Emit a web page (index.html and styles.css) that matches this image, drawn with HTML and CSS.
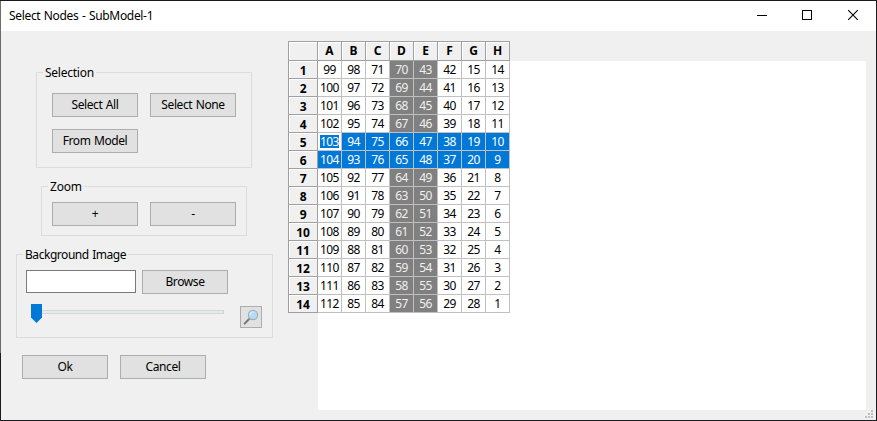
FILE: index.html
```html
<!DOCTYPE html>
<html lang="en">
<head>
<meta charset="utf-8">
<title>Select Nodes - SubModel-1</title>
<link rel="stylesheet" href="styles.css">
</head>
<body>
<div class="window">
  <header class="titlebar">
    <span class="title">Select Nodes - SubModel-1</span>
    <svg class="controls" width="138" height="29" viewBox="0 0 138 29" fill="none" stroke="#000">
      <path d="M19 14.5h10M64.5 9.5h9v9h-9z" shape-rendering="crispEdges"/>
      <path d="M110.2 9.2l9.6 9.6M119.8 9.2l-9.6 9.6" stroke-width="1.1"/>
    </svg>
  </header>
  <main class="content">
    <section class="panel">
      <div class="group selection">
        <span class="legend">Selection</span>
        <div class="row"><button class="btn">Select All</button><button class="btn">Select None</button></div>
        <div class="row"><button class="btn">From Model</button></div>
      </div>
      <div class="group zoom">
        <span class="legend">Zoom</span>
        <div class="row"><button class="btn">+</button><button class="btn">-</button></div>
      </div>
      <div class="group background">
        <span class="legend">Background Image</span>
        <div class="row file"><input class="path" type="text"><button class="btn">Browse</button></div>
        <div class="row opacity">
          <div class="slider">
            <svg class="thumb" width="11" height="19" viewBox="0 0 11 19"><path fill="#0078d7" d="M0 0h11v13.5L5.5 19 0 13.5z"/></svg>
          </div>
          <button class="btn icon">
            <svg width="20" height="20" viewBox="0 0 20 20" fill="none">
              <path d="M3.6 16.6l4.8-4.8" stroke="#737679" stroke-width="2" stroke-linecap="round"/>
              <path d="M7.6 12.4l1.8-1.8" stroke="#a9a9a9" stroke-width="1.2"/>
              <circle cx="12" cy="8" r="4.6" fill="#b3dcf8" stroke="#a3acb4" stroke-width="1.1"/>
              <path d="M9 8.2a3.2 3.2 0 0 1 4-3.2" stroke="#d7edfc" stroke-width="1.3"/>
            </svg>
          </button>
        </div>
      </div>
      <div class="row actions"><button class="btn">Ok</button><button class="btn">Cancel</button></div>
    </section>
    <section class="sheet">
      <div class="grid" id="grid"></div>
    </section>
  </main>
  <svg class="grip" width="8" height="8" viewBox="0 0 8 8" fill="#bfbfbf"><path d="M6 0h2v2H6zM3 3h2v2H3zM6 3h2v2H6zM0 6h2v2H0zM3 6h2v2H3zM6 6h2v2H6z"/></svg>
</div>
<script src="script.js"></script>
</body>
</html>
```
FILE: styles.css
```css
* { box-sizing: border-box; }
body {
  margin: 0;
  font: 12px/16px "Noto Sans", "Open Sans", sans-serif;
  letter-spacing: -0.4px;
  word-spacing: 0.7px;
  color: #000;
}
.window {
  position: relative;
  width: 877px;
  height: 421px;
  padding-left: 1px;
  border: 1px solid #1b1a1c;
  border-left: 0;
  background: linear-gradient(#6c6a6c 352px, #1b1a1c 352px) left / 1px 100% no-repeat #f0f0f0;
  overflow: hidden;
}
.titlebar {
  display: flex;
  justify-content: space-between;
  height: 30px;
  padding-left: 8px;
  background: #fff;
}
.title { line-height: 29px; letter-spacing: -0.33px; }
.content { display: flex; height: 389px; }
.panel { width: 287px; flex: none; padding-top: 41px; }
.group { border: 1px solid #dcdcdc; }
.legend {
  display: block;
  width: max-content;
  height: 16px;
  margin: -8px 0 0 6px;
  padding: 0 2px;
  background: #f0f0f0;
}
.row { display: flex; }
.btn {
  width: 86px;
  height: 24px;
  padding: 0 0 1px;
  border: 1px solid #adadad;
  border-radius: 0;
  background: #e1e1e1;
  font: inherit;
  letter-spacing: inherit;
  word-spacing: inherit;
  line-height: 21px;
  color: #000;
}
.selection { width: 216px; height: 96px; margin-left: 35px; }
.selection .legend { letter-spacing: -0.25px; }
.selection .row, .zoom .row { gap: 12px; }
.selection .row { margin: 12px 0 0 15px; }
.zoom { width: 206px; height: 50px; margin: 18px 0 0 40px; }
.zoom .legend { letter-spacing: -0.2px; }
.zoom .row { margin: 7px 0 0 10px; }
.background { width: 257px; height: 84px; margin: 18px 0 0 15px; }
.background .legend { letter-spacing: -0.45px; }
.file { gap: 6px; margin: 7px 0 0 9px; }
.path {
  width: 110px;
  height: 23px;
  border: 1px solid #7a7a7a;
  background: #fff;
}
.opacity { margin: 10px 0 0 14px; }
.slider {
  position: relative;
  width: 193px;
  height: 4px;
  margin: 6px 16px 0 0;
  border: 1px solid #d6d6d6;
  background: #e7eaea;
}
.thumb { position: absolute; left: -1px; top: -7px; }
.btn.icon { width: 22px; height: 22px; padding: 0; margin-top: 2px; }
.icon svg { display: block; }
.actions { gap: 12px; margin: 17px 0 0 21px; }
.sheet {
  width: 578px;
  height: 369px;
  margin-top: 10px;
  background: linear-gradient(#fff, #fff) 30px 20px no-repeat;
}
.grid {
  display: grid;
  width: 222px;
  grid-template-columns: 30px repeat(8, 24px);
  grid-template-rows: 20px repeat(14, 18px);
  text-align: center;
}
.cell {
  border: solid #c0c0c0;
  border-width: 0 1px 1px 0;
  background: #fff;
  line-height: 18px;
  letter-spacing: -0.6px;
  white-space: nowrap;
}
.head {
  border: solid #a0a0a0;
  border-width: 0 1px 1px 0;
  background: #f0f0f0;
  box-shadow: inset 1px 1px #fff;
  font-weight: 700;
  letter-spacing: 0;
  line-height: 18px;
}
.top { border-top-width: 1px; }
.side { border-left-width: 1px; }
.side:not(.top) { line-height: 19px; letter-spacing: -0.2px; }
.shade { background: #808080; color: #f0f0f0; }
.picked { background: #0078d7; color: #fff; }
.active { padding: 2px; background: #fff; }
.active span { display: block; height: 13px; line-height: 14px; background: #0078d7; }
.grip { position: absolute; right: 3px; bottom: 2px; }
```
FILE: script.js
```js
const grid = document.getElementById('grid');
const columns = [
  ['A', 99, 1], ['B', 98, -1], ['C', 71, 1], ['D', 70, -1],
  ['E', 43, 1], ['F', 42, -1], ['G', 15, 1], ['H', 14, -1]
];

function add(text, className) {
  const cell = document.createElement('div');
  cell.className = className;
  const label = document.createElement('span');
  label.textContent = text;
  cell.append(label);
  grid.append(cell);
}

add('', 'head top side');
columns.forEach(([name]) => add(name, 'head top'));
for (let row = 0; row < 14; row++) {
  add(row + 1, 'head side');
  columns.forEach(([name, start, step]) => {
    let style = 'cell';
    if (row === 4 || row === 5) style += ' picked';
    else if (name === 'D' || name === 'E') style += ' shade';
    if (row === 4 && name === 'A') style += ' active';
    add(start + step * row, style);
  });
}
```
